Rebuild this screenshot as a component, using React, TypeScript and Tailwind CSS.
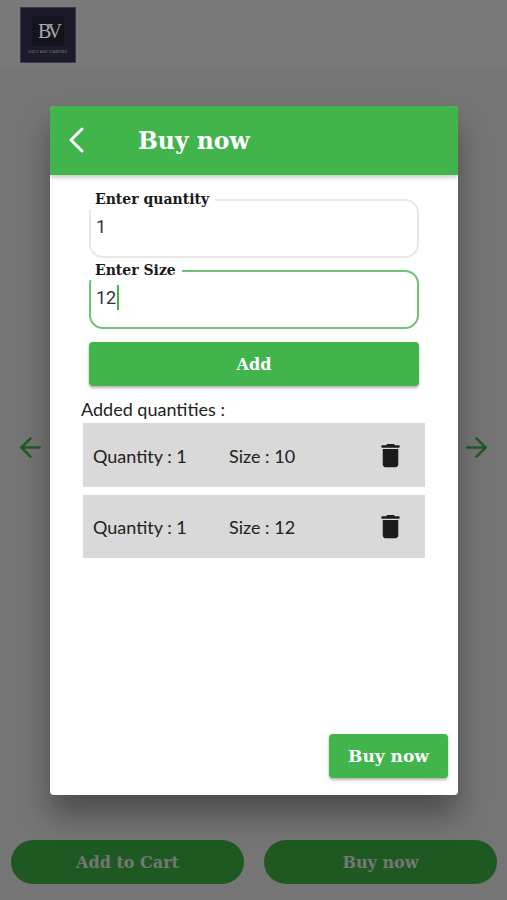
import { ArrowLeft, ArrowRight } from "lucide-react";
import { MdDelete } from "react-icons/md";

const serif = "font-['DejaVu_Serif',serif] font-bold";
const lato = "font-['Lato',sans-serif]";

const Field = ({ label, value, focused }: { label: string; value: string; focused?: boolean }) => (
  <div
    className={`relative h-[59px] rounded-[14px] border-2 px-[5px] pt-[10px] ${
      focused ? "border-[#6cc474]" : "border-[#e8e8e8]"
    }`}
  >
    <span
      className={`${serif} absolute left-[-6px] top-[-12px] bg-white pl-[10px] pr-[6px] text-[14px] leading-[20px] text-[#1a1a1a]`}
    >
      {label}
    </span>
    <div className="flex h-[30px] items-center font-['Roboto',sans-serif] text-[18px] text-[#333]">
      {value}
      {focused && <span className="ml-[1px] h-[25px] w-[2px] bg-[#41b44b]" />}
    </div>
  </div>
);

const QuantityRow = ({ size }: { size: number }) => (
  <div className={`${lato} flex h-[63.5px] items-center bg-[#d9d9d9] pl-[10px] pt-[3px] text-[18px] text-[#222]`}>
    <span className="w-[136px]">Quantity : 1</span>
    <span className="w-[146px]">Size : {size}</span>
    <MdDelete size={31} className="mt-[-2px] text-[#1c1c1c]" />
  </div>
);

const App = () => {
  return (
    <div className="relative flex h-[900px] w-[507px] flex-col overflow-hidden bg-[#757575]">
      {/* Page behind the dialog */}
      <div className="h-[68px] bg-[#797979] pl-[20px] pt-[7px]">
        <div className="flex h-[56px] w-[56px] flex-col items-center border border-[#3a3a48] bg-[#1b1b29] pt-[8px]">
          <div className="flex h-[30px] w-[32px] items-center justify-center bg-[#14141f] font-['Liberation_Serif',serif] text-[20px] leading-none tracking-[-4px] text-[#a9a9a9]">
            BV
          </div>
          <span className="mt-[4px] whitespace-nowrap text-[3px] tracking-[0.5px] text-[#8a8a8a]">GOLD AND DIAMOND</span>
        </div>
      </div>
      <div className="flex flex-1 items-center justify-between px-[15px] pb-[14px] text-[#1f5c22]">
        <ArrowLeft size={31} strokeWidth={2} />
        <ArrowRight size={31} strokeWidth={2} />
      </div>
      <div className="flex gap-[20px] pb-[16px] pl-[11px] pr-[10px]">
        {["Add to Cart", "Buy now"].map((t) => (
          <button
            key={t}
            className={`${serif} h-[44px] flex-1 rounded-[22px] bg-[#1f5922] pt-[2px] text-[16px] text-[#767676]`}
          >
            {t}
          </button>
        ))}
      </div>

      {/* Dialog */}
      <div className="absolute left-[50px] top-[106px] flex h-[689px] w-[408px] flex-col overflow-hidden rounded-[4px] bg-white shadow-[0_20px_30px_rgba(0,0,0,0.35)]">
        <div className="flex h-[69px] shrink-0 items-center bg-[#41b44b] pl-[18px] shadow-[0_2px_5px_rgba(0,0,0,0.25)]">
          <svg width="16" height="26" viewBox="0 0 16 26" fill="none" stroke="white" strokeWidth="3" strokeLinecap="round" strokeLinejoin="round" className="mt-[-2px]">
            <path d="M14 2 3 13l11 11" />
          </svg>
          <span className={`${serif} ml-[54px] pt-[2px] text-[23.5px] text-white`}>Buy now</span>
        </div>
        <div className="flex flex-1 flex-col">
          <div className="flex flex-col gap-[12px] px-[39px] pt-[24px]">
            <Field label="Enter quantity" value="1" />
            <Field label="Enter Size" value="12" focused />
          </div>
          <button
            className={`${serif} mx-[39px] mt-[13px] h-[44px] rounded-[4px] bg-[#41b44b] pt-[2px] text-[16px] text-white shadow-[0_2px_3px_rgba(0,0,0,0.3)]`}
          >
            Add
          </button>
          <p className={`${lato} ml-[31px] mt-[12px] text-[18px] leading-[22px] text-[#222]`}>Added quantities :</p>
          <div className="mx-[33px] mt-[3px] flex flex-col gap-[8px]">
            <QuantityRow size={10} />
            <QuantityRow size={12} />
          </div>
          <div className="mt-auto flex justify-end pb-[17px] pr-[10px]">
            <button
              className={`${serif} h-[44px] w-[119px] rounded-[4px] bg-[#41b44b] pt-[2px] text-[17px] text-white shadow-[0_2px_3px_rgba(0,0,0,0.3)]`}
            >
              Buy now
            </button>
          </div>
        </div>
      </div>
    </div>
  );
};

export default App;
